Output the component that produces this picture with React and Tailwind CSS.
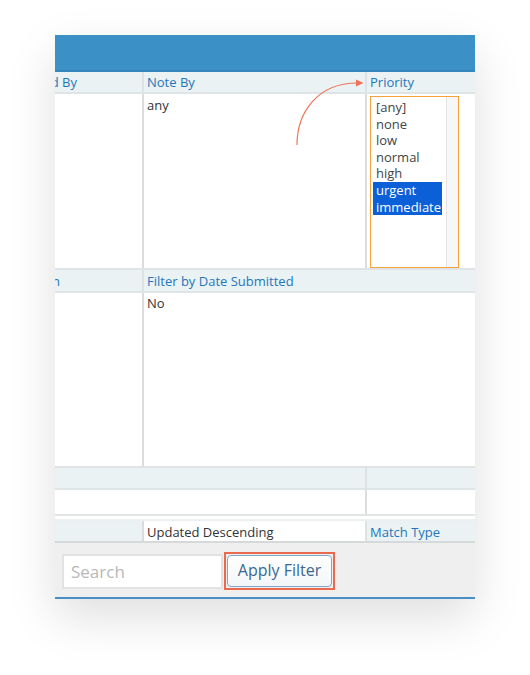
import React from 'react';

const font = { fontFamily: '"Open Sans", "Liberation Sans", sans-serif' };

const Head = ({ children, className = '' }) => (
  <div className={`text-[13px] leading-[18px] text-[#1f77bb] px-[3px] pt-[1px] whitespace-nowrap ${className}`}>{children}</div>
);

const options = ['[any]', 'none', 'low', 'normal', 'high', 'urgent', 'immediate'];
const selected = ['urgent', 'immediate'];

const PrioritySelect = () => (
  <div className="mt-[2px] ml-[2px] w-[89px] h-[172px] border-[1.5px] border-[#f6a23c] flex bg-white">
    <div className="flex-1 pl-[2px] pt-[2px] text-[13px] leading-[16.6px] text-[#444]">
      {options.map((o) => (
        <div
          key={o}
          className={selected.includes(o) ? 'bg-[#0b5fd7] text-white pl-[3px] w-[69px]' : 'pl-[3px]'}
        >
          {o}
        </div>
      ))}
    </div>
    <div className="w-[12px] bg-[#f7f7f7] border-l border-[#e4e4e4]"></div>
  </div>
);

export default function App() {
  return (
    <div className="relative w-[530px] h-[675px] bg-white pt-[35px] pl-[55px]" style={font}>
      <div className="w-[420px] flex flex-col bg-white shadow-[0_18px_45px_rgba(0,0,0,0.13)]">
        {/* blue header bar */}
        <div className="h-[37px] bg-[#3b90c6] border-b-2 border-[#3486bd]"></div>

        {/* row 1 header */}
        <div className="h-[22px] flex bg-[#eaf2f4] border-b-2 border-[#dfe5e7]">
          <div className="w-[87px] overflow-hidden flex justify-end">
            <Head className="shrink-0 pr-[65px]">Reported By</Head>
          </div>
          <div className="w-[223px] border-l-2 border-[#dde2e4]"><Head>Note By</Head></div>
          <div className="flex-1 border-l-2 border-[#dde2e4]"><Head>Priority</Head></div>
        </div>

        {/* row 1 body */}
        <div className="h-[176px] flex border-b-2 border-[#dfe3e5]">
          <div className="w-[87px]"></div>
          <div className="w-[223px] border-l-2 border-[#dcdcdc] px-[3px] pt-[2px] text-[13px] leading-[18px] text-[#333]">any</div>
          <div className="flex-1 border-l-2 border-[#dcdcdc] pl-[1px]">
            <PrioritySelect />
          </div>
        </div>

        {/* row 2 header */}
        <div className="h-[23px] flex bg-[#eaf2f4] border-b-2 border-[#dfe5e7]">
          <div className="w-[87px] overflow-hidden flex justify-end">
            <Head className="shrink-0 pr-[82px] pt-[2px]">Show Notes Column</Head>
          </div>
          <div className="flex-1 border-l-2 border-[#dde2e4]"><Head className="pt-[2px]">Filter by Date Submitted</Head></div>
        </div>

        {/* row 2 body */}
        <div className="h-[175px] flex border-b-2 border-[#dfe3e5]">
          <div className="w-[87px]"></div>
          <div className="flex-1 border-l-2 border-[#dcdcdc] px-[3px] pt-[1px] text-[13px] leading-[18px] text-[#333]">No</div>
        </div>

        {/* row 3 header */}
        <div className="h-[22px] flex bg-[#eaf2f4] border-b-2 border-[#dfe5e7]">
          <div className="w-[310px]"></div>
          <div className="flex-1 border-l-2 border-[#dde2e4]"></div>
        </div>

        {/* row 3 body */}
        <div className="h-[26px] flex border-b-2 border-[#e2e5e6]">
          <div className="w-[310px]"></div>
          <div className="flex-1 border-l-2 border-[#dcdcdc]"></div>
        </div>

        <div className="h-[5px] border-b-2 border-[#eceff0]"></div>

        {/* row 4 */}
        <div className="h-[22px] flex border-b-2 border-[#d6d9da]">
          <div className="w-[87px] bg-[#eaf2f4]"></div>
          <div className="w-[223px] border-l-2 border-[#dcdcdc] px-[3px] pt-px text-[13px] leading-[20px] text-[#333]">Updated Descending</div>
          <div className="flex-1 border-l-2 border-[#dde2e4] bg-[#eaf2f4]"><Head className="pt-[2px]">Match Type</Head></div>
        </div>

        {/* footer */}
        <div className="h-[56px] bg-[#efefef] border-b-2 border-[#4a8fc3] flex items-start pt-[9px] pl-[7px]">
          <div className="mt-[2px] w-[161px] h-[35px] bg-white border-2 border-[#e2e2e2] px-[7px] text-[17px] leading-[31px] text-[#b8b8b8]">
            Search
          </div>
          <div className="ml-[1px] w-[111px] h-[38px] border-2 border-[#ea6a4f] p-px">
            <button className="w-full h-full rounded-[4px] border border-[#84a9c8] bg-gradient-to-b from-white to-[#f3f6f8] text-[16px] leading-[28px] text-[#3b6890] pb-[2px]">
              Apply Filter
            </button>
          </div>
        </div>
      </div>

      {/* callout arrow */}
      <svg className="absolute left-0 top-0" width="530" height="675" viewBox="0 0 530 675" fill="none">
        <path d="M297 145 C297 112 318 83 357 83" stroke="#ef735a" strokeWidth="1.2" />
        <polygon points="356,79.5 363.5,83 356,86.5" fill="#ef735a" />
      </svg>
    </div>
  );
}
